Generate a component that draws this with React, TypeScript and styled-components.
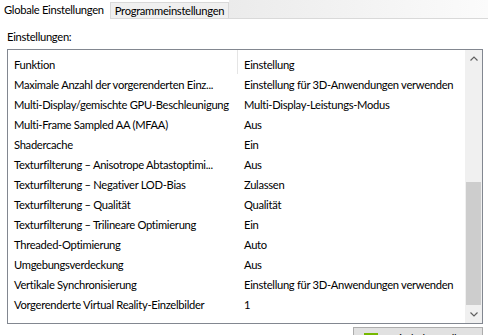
import React from 'react'
import styled, { createGlobalStyle } from 'styled-components'

const GlobalStyle = createGlobalStyle`
    html, body {
        margin: 0;
        padding: 0;
        background: #ffffff;
    }
    body {
        font-family: Lato, "Noto Sans", sans-serif;
        font-size: 11.2px;
        letter-spacing: -0.3px;
        color: #000000;
    }
`

const Page = styled.div`
    width: 488px;
    height: 335px;
    overflow: hidden;
    background: #ffffff;
    display: flex;
    flex-direction: column;

    & > * {
        flex-shrink: 0;
    }
`

const TabStrip = styled.div`
    display: flex;
    height: 19px;
    align-items: stretch;
`

const Tab = styled.div<{ $active?: boolean }>`
    display: flex;
    align-items: center;
    padding: ${p => (p.$active ? '0 5px 0 3px' : '0 4px')};
    white-space: nowrap;
    background: ${p => (p.$active ? '#ffffff' : '#f0f0f0')};
    border: 1px solid ${p => (p.$active ? 'transparent' : '#d9d9d9')};
    margin-top: ${p => (p.$active ? '0' : '2px')};
    line-height: 1;
`

const TabFiller = styled.div`
    flex: 1;
    background: linear-gradient(to right, #ebebeb, #fbfbfb);
    border-bottom: 1px solid #d9d9d9;
`

const Content = styled.div`
    display: flex;
    flex-direction: column;
    padding: 0 5px 0 7px;
`

const Label = styled.div`
    margin-top: 11px;
    height: 19px;
    line-height: 14px;
`

const ListBox = styled.div`
    display: flex;
    height: 273px;
    border: 1px solid #828790;
`

const ListBody = styled.div`
    flex: 1;
    display: flex;
    flex-direction: column;
    min-width: 0;
`

const HeaderRow = styled.div`
    display: flex;
    height: 24px;
    align-items: stretch;
`

const HeaderCell = styled.div<{ $first?: boolean }>`
    width: ${p => (p.$first ? '223px' : 'auto')};
    flex: ${p => (p.$first ? 'none' : '1')};
    padding: 4px 0 0 6px;
    display: flex;
    align-items: center;
    border-right: ${p => (p.$first ? '1px solid #e5e5e5' : 'none')};
    white-space: nowrap;
`

const Row = styled.div`
    display: flex;
    height: 20px;
    align-items: center;
    white-space: nowrap;
`

const Cell = styled.div<{ $first?: boolean }>`
    width: ${p => (p.$first ? '224px' : 'auto')};
    flex: ${p => (p.$first ? 'none' : '1')};
    padding-left: 6px;
    overflow: hidden;
`

const ScrollBar = styled.div`
    width: 17px;
    display: flex;
    flex-direction: column;
    background: #f0f0f0;
`

const ArrowButton = styled.div`
    height: 17px;
    display: flex;
    align-items: center;
    justify-content: center;
`

const Track = styled.div`
    flex: 1;
    display: flex;
    flex-direction: column;
    padding: 0 1px;
`

const Thumb = styled.div<{ $top: number; $height: number }>`
    margin-top: ${p => p.$top}px;
    height: ${p => p.$height}px;
    background: #cdcdcd;
`

const Footer = styled.div`
    display: flex;
    justify-content: flex-end;
    padding-top: 3px;
`

const Button = styled.div`
    width: 130px;
    height: 22px;
    display: flex;
    align-items: center;
    gap: 10px;
    padding-left: 10px;
    background: #e1e1e1;
    border: 1px solid #adadad;
    box-sizing: border-box;
`

const Chevron = ({ down }: { down?: boolean }) => (
    <svg width="8" height="5" viewBox="0 0 8 5">
        <path
            d={down ? 'M0.5 0.5 L4 4 L7.5 0.5' : 'M0.5 4.5 L4 1 L7.5 4.5'}
            fill="none"
            stroke="#606060"
            strokeWidth="1.2"
        />
    </svg>
)

const rows: [string, string][] = [
    ['Maximale Anzahl der vorgerenderten Einz...', 'Einstellung für 3D-Anwendungen verwenden'],
    ['Multi-Display/gemischte GPU-Beschleunigung', 'Multi-Display-Leistungs-Modus'],
    ['Multi-Frame Sampled AA (MFAA)', 'Aus'],
    ['Shadercache', 'Ein'],
    ['Texturfilterung – Anisotrope Abtastoptimi...', 'Aus'],
    ['Texturfilterung – Negativer LOD-Bias', 'Zulassen'],
    ['Texturfilterung – Qualität', 'Qualität'],
    ['Texturfilterung – Trilineare Optimierung', 'Ein'],
    ['Threaded-Optimierung', 'Auto'],
    ['Umgebungsverdeckung', 'Aus'],
    ['Vertikale Synchronisierung', 'Einstellung für 3D-Anwendungen verwenden'],
    ['Vorgerenderte Virtual Reality-Einzelbilder', '1'],
]

export default function App() {
    return (
        <Page>
            <GlobalStyle />
            <TabStrip>
                <Tab $active>Globale Einstellungen</Tab>
                <Tab>Programmeinstellungen</Tab>
                <TabFiller />
            </TabStrip>
            <Content>
                <Label>Einstellungen:</Label>
                <ListBox>
                    <ListBody>
                        <HeaderRow>
                            <HeaderCell $first>Funktion</HeaderCell>
                            <HeaderCell>Einstellung</HeaderCell>
                        </HeaderRow>
                        {rows.map(([name, value]) => (
                            <Row key={name}>
                                <Cell $first>{name}</Cell>
                                <Cell>{value}</Cell>
                            </Row>
                        ))}
                    </ListBody>
                    <ScrollBar>
                        <ArrowButton>
                            <Chevron />
                        </ArrowButton>
                        <Track>
                            <Thumb $top={115} $height={123} />
                        </Track>
                        <ArrowButton>
                            <Chevron down />
                        </ArrowButton>
                    </ScrollBar>
                </ListBox>
                <Footer>
                    <Button>
                        <svg width="14" height="10" viewBox="0 0 14 10">
                            <rect x="0" y="0" width="14" height="10" fill="#76b900" />
                        </svg>
                        Wiederherstellen
                    </Button>
                </Footer>
            </Content>
        </Page>
    )
}
